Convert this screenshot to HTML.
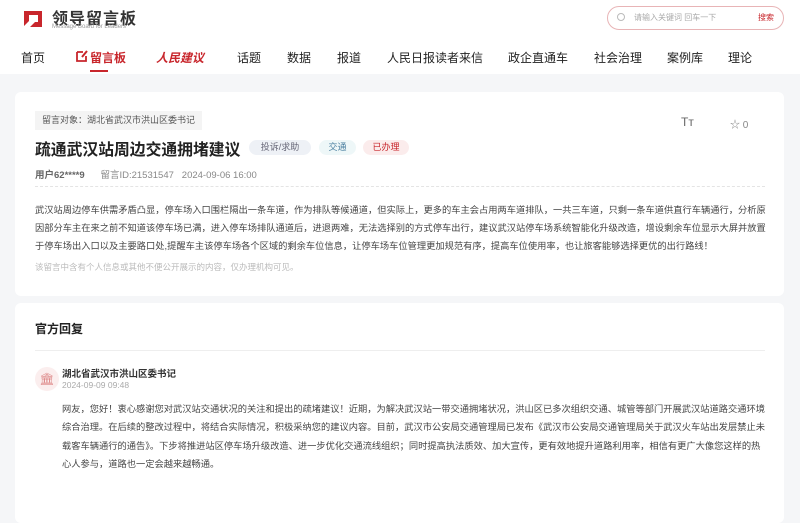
<!DOCTYPE html>
<html><head><meta charset="utf-8"><style>
*{margin:0;padding:0;box-sizing:border-box}
body{width:800px;height:500px;overflow:hidden;background:#f5f6f8;font-family:"Liberation Sans","Noto Sans CJK SC",sans-serif;color:#333;position:relative}
.hdr{position:absolute;left:0;top:0;width:800px;height:74px;background:#fff}
.abs{position:absolute;white-space:nowrap}
.nav{top:49px;font-size:12px;color:#222}
.card{position:absolute;left:15px;width:769px;background:#fff;border-radius:6px}
.p{font-size:9.25px;color:#444;line-height:18px;white-space:nowrap}
.r{font-size:9.25px;color:#444;line-height:18.3px;white-space:nowrap}
.tag{position:absolute;top:140px;height:15px;border-radius:8px;font-size:9px;line-height:15px;text-align:center}
</style></head><body>
<div class="hdr">
<svg class="abs" style="left:21px;top:7px" width="24" height="24" viewBox="0 0 24 24"><path d="M3 4h18v16H9l5-5h3V8H8v6l-5 5z" fill="#c8262c"/></svg>
<div class="abs" style="left:52px;top:5px;font-size:16px;font-weight:bold;color:#333;letter-spacing:1px">领导留言板</div>
<div class="abs" style="left:52px;top:24px;font-size:6px;color:#999">Message Board for Leaders</div>
<div class="abs nav" style="left:21px">首页</div>
<svg class="abs" style="left:76px;top:50px" width="12" height="12" viewBox="0 0 12 12"><path d="M1 2h6M1 2v9h9V6" stroke="#c8262c" stroke-width="1.8" fill="none"/><path d="M6 7l5-6" stroke="#c8262c" stroke-width="2"/></svg>
<div class="abs nav" style="left:90px;color:#c8262c;font-weight:bold">留言板</div>
<div class="abs" style="left:90px;top:70px;width:18px;height:2px;background:#c8262c"></div>
<div class="abs nav" style="left:156px;color:#c8262c;font-weight:bold;font-style:italic">人民建议</div>
<div class="abs nav" style="left:237px">话题</div>
<div class="abs nav" style="left:287px">数据</div>
<div class="abs nav" style="left:337px">报道</div>
<div class="abs nav" style="left:387px">人民日报读者来信</div>
<div class="abs nav" style="left:508px">政企直通车</div>
<div class="abs nav" style="left:594px">社会治理</div>
<div class="abs nav" style="left:667px">案例库</div>
<div class="abs nav" style="left:728px">理论</div>
<div class="abs" style="left:607px;top:6px;width:177px;height:24px;border:1px solid #e8b4b6;border-radius:12px"></div>
<div class="abs" style="left:617px;top:13px;width:8px;height:8px;border:1px solid #bbb;border-radius:50%"></div>
<div class="abs" style="left:634px;top:12px;font-size:8px;color:#aaa">请输入关键词 回车一下</div>
<div class="abs" style="left:758px;top:12px;font-size:8px;color:#c8262c">搜索</div>
</div>

<div class="card" style="top:92px;height:204px"></div>
<div class="abs" style="left:35px;top:111px;height:19px;padding:0 7px;background:#f4f4f4;font-size:9px;line-height:19px;color:#555">留言对象：湖北省武汉市洪山区委书记</div>
<div class="abs" style="left:35px;top:137px;font-size:15.8px;font-weight:bold;color:#222">疏通武汉站周边交通拥堵建议</div>
<div class="tag" style="left:249px;width:62px;background:#eef1f6;color:#667">投诉/求助</div>
<div class="tag" style="left:319px;width:37px;background:#eef7f8;color:#4a7fa0">交通</div>
<div class="tag" style="left:363px;width:46px;background:#fbecec;color:#c8262c">已办理</div>
<div class="abs" style="left:681px;top:115px;font-size:12px;color:#666">Tт</div>
<div class="abs" style="left:730px;top:116px;font-size:10px;color:#888">☆ 0</div>
<div class="abs" style="left:35px;top:167px;font-size:9.5px;color:#888"><b style="color:#666">用户62****9</b>&nbsp;&nbsp;&nbsp;&nbsp;&nbsp;&nbsp;留言ID:21531547&nbsp;&nbsp;&nbsp;2024-09-06 16:00</div>
<div class="abs" style="left:35px;top:186px;width:730px;border-top:1px dashed #e4e4e4"></div>
<div class="abs" style="left:35px;top:201px">
<div class="p">武汉站周边停车供需矛盾凸显，停车场入口围栏隔出一条车道，作为排队等候通道，但实际上，更多的车主会占用两车道排队，一共三车道，只剩一条车道供直行车辆通行，分析原</div>
<div class="p">因部分车主在来之前不知道该停车场已满，进入停车场排队通道后，进退两难，无法选择别的方式停车出行，建议武汉站停车场系统智能化升级改造，增设剩余车位显示大屏并放置</div>
<div class="p">于停车场出入口以及主要路口处,提醒车主该停车场各个区域的剩余车位信息，让停车场车位管理更加规范有序，提高车位使用率，也让旅客能够选择更优的出行路线！</div>
</div>
<div class="abs" style="left:35px;top:261px;font-size:8.5px;color:#bbb">该留言中含有个人信息或其他不便公开展示的内容，仅办理机构可见。</div>

<div class="card" style="top:303px;height:220px"></div>
<div class="abs" style="left:35px;top:320px;font-size:12px;font-weight:bold;color:#222">官方回复</div>
<div class="abs" style="left:35px;top:350px;width:730px;border-top:1px solid #eee"></div>
<div class="abs" style="left:35px;top:367px;width:24px;height:24px;border-radius:50%;background:#fbeeee;color:#d88;font-size:12px;text-align:center;line-height:24px">🏛</div>
<div class="abs" style="left:62px;top:366px;font-size:9.5px;font-weight:bold;color:#333">湖北省武汉市洪山区委书记</div>
<div class="abs" style="left:62px;top:380px;font-size:8.5px;color:#aaa">2024-09-09 09:48</div>
<div class="abs" style="left:62px;top:400px">
<div class="r">网友，您好！衷心感谢您对武汉站交通状况的关注和提出的疏堵建议！近期，为解决武汉站一带交通拥堵状况，洪山区已多次组织交通、城管等部门开展武汉站道路交通环境</div>
<div class="r">综合治理。在后续的整改过程中，将结合实际情况，积极采纳您的建议内容。目前，武汉市公安局交通管理局已发布《武汉市公安局交通管理局关于武汉火车站出发层禁止未</div>
<div class="r">载客车辆通行的通告》。下步将推进站区停车场升级改造、进一步优化交通流线组织；同时提高执法质效、加大宣传，更有效地提升道路利用率，相信有更广大像您这样的热</div>
<div class="r">心人参与，道路也一定会越来越畅通。</div>
</div>
</body></html>
